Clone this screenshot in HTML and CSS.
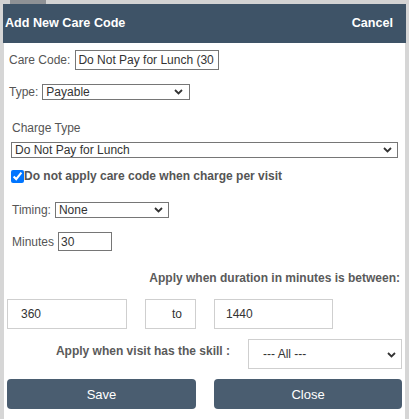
FILE: index.html
```html
<!DOCTYPE html>
<html>
<head>
<meta charset="utf-8">
<link rel="stylesheet" href="styles.css">
</head>
<body>
<div class="topstrip"><div class="topblock"></div></div>
<div class="dialog">
  <div class="header">
    <span class="title">Add New Care Code</span>
    <span class="cancel">Cancel</span>
  </div>
  <div class="content">
    <div class="row row-code">
      <label class="lbl">Care Code:</label>
      <input class="inp inp-code" type="text" value="Do Not Pay for Lunch (30">
    </div>
    <div class="row row-type">
      <label class="lbl">Type:</label>
      <div class="sel sel-type"><span>Payable</span>
        <svg class="chev" width="9" height="6" viewBox="0 0 9 6"><path d="M1 1 L4.5 4.5 L8 1" fill="none" stroke="#333" stroke-width="1.8"/></svg>
      </div>
    </div>
    <div class="charge-label">Charge Type</div>
    <div class="sel sel-charge"><span>Do Not Pay for Lunch</span>
      <svg class="chev" width="9" height="6" viewBox="0 0 9 6"><path d="M1 1 L4.5 4.5 L8 1" fill="none" stroke="#333" stroke-width="1.8"/></svg>
    </div>
    <div class="row row-check">
      <input type="checkbox" class="chk" checked>
      <span class="chk-label">Do not apply care code when charge per visit</span>
    </div>
    <div class="row row-timing">
      <label class="lbl">Timing:</label>
      <div class="sel sel-timing"><span>None</span>
        <svg class="chev" width="9" height="6" viewBox="0 0 9 6"><path d="M1 1 L4.5 4.5 L8 1" fill="none" stroke="#333" stroke-width="1.8"/></svg>
      </div>
    </div>
    <div class="row row-min">
      <label class="lbl">Minutes</label>
      <input class="inp inp-min" type="text" value="30">
    </div>
    <div class="apply">Apply when duration in minutes is between:</div>
    <div class="range">
      <div class="box box-a">360</div>
      <div class="box box-to">to</div>
      <div class="box box-b">1440</div>
    </div>
    <div class="skill">
      <span class="skill-label">Apply when visit has the skill :</span>
      <div class="sel2"><span>--- All ---</span>
        <svg class="chev" width="9" height="6" viewBox="0 0 9 6"><path d="M1 1 L4.5 4.5 L8 1" fill="none" stroke="#333" stroke-width="1.8"/></svg>
      </div>
    </div>
    <div class="buttons">
      <div class="btn">Save</div>
      <div class="btn">Close</div>
    </div>
  </div>
</div>
</body>
</html>
```
FILE: styles.css
```css
* { box-sizing: border-box; }
html, body { margin: 0; padding: 0; }
body {
  width: 409px;
  height: 419px;
  overflow: hidden;
  background: #d6d6d6;
  font-family: "Liberation Sans", Arial, sans-serif;
  font-size: 12px;
  color: #555;
}
.topstrip {
  height: 4px;
  background: #d3d3d3;
  display: flex;
}
.topblock {
  margin-left: 10px;
  width: 36px;
  height: 4px;
  background: #8e9195;
}
.dialog {
  margin-left: 3px;
  width: 403px;
}
.header {
  height: 39px;
  background: #3e5367;
  color: #fff;
  font-weight: bold;
  font-size: 12.6px;
  display: flex;
  justify-content: space-between;
  align-items: center;
  padding: 0 13px 2px 2px;
}
.content {
  margin: 0 1px;
  background: #fff;
  height: 376px;
  display: flex;
  flex-direction: column;
}
.row {
  display: flex;
  align-items: center;
}
.lbl { color: #555; font-size: 12px; }
.inp {
  font-family: "Liberation Sans", Arial, sans-serif;
  font-size: 12px;
  color: #333;
  border: 1px solid #767676;
  border-radius: 0;
  padding: 0 2px;
  margin: 0;
  outline: none;
  background: #fff;
}
.row-code { margin: 7px 0 0 5px; height: 20px; gap: 5px; }
.inp-code { width: 144px; height: 20px; }
.sel {
  position: relative;
  border: 1px solid #767676;
  height: 16px;
  color: #333;
  font-size: 12px;
  line-height: 14px;
  padding-left: 3px;
  background: #fff;
}
.chev { position: absolute; right: 5px; top: 4px; }
.row-type { margin: 14px 0 0 5px; height: 16px; gap: 4px; }
.sel-type { width: 148px; }
.sel-type .chev { right: 6px; }
.charge-label {
  margin: 21px 0 0 8px;
  line-height: 14px;
  color: #555;
}
.sel-charge { margin: 7px 0 0 7px; width: 387px; }
.row-check { margin: 10px 0 0 7px; height: 16px; }
.chk {
  width: 13px;
  height: 13px;
  margin: 0;
  accent-color: #0075ff;
}
.chk-label { font-weight: bold; color: #555; margin-left: 0; }
.row-timing { margin: 18px 0 0 8px; height: 16px; gap: 4px; }
.sel-timing { width: 114px; }
.row-min { margin: 14px 0 0 8px; height: 19px; gap: 4px; }
.inp-min { width: 54px; height: 19px; }
.apply {
  margin-top: 20px;
  line-height: 14px;
  text-align: right;
  padding-right: 5px;
  font-weight: bold;
  color: #5a5a5a;
}
.range {
  margin: 14px 0 0 3px;
  display: flex;
  gap: 18px;
}
.box {
  height: 30px;
  border: 1px solid #cfcfcf;
  line-height: 28px;
  color: #333;
  font-size: 12px;
}
.box-a { width: 120px; padding-left: 13px; }
.box-to { width: 51px; padding-left: 26px; }
.box-b { width: 119px; padding-left: 11px; }
.skill {
  margin-top: 10px;
  display: flex;
  justify-content: flex-end;
  align-items: flex-start;
  padding-right: 3px;
}
.skill-label {
  font-weight: bold;
  color: #5a5a5a;
  line-height: 14px;
  margin-top: 5px;
  margin-right: 18px;
}
.sel2 {
  position: relative;
  width: 154px;
  height: 30px;
  border: 1px solid #cfcfcf;
  line-height: 28px;
  padding-left: 14px;
  color: #333;
}
.sel2 .chev { top: 12px; right: 5px; }
.buttons {
  margin: 10px 0 0 3px;
  display: flex;
  gap: 18px;
}
.btn {
  width: 189px;
  height: 30px;
  border-radius: 4px;
  background: #4a5d70;
  color: #fff;
  font-size: 13px;
  display: flex;
  align-items: center;
  justify-content: center;
}
.btn + .btn { width: 188px; }
```
